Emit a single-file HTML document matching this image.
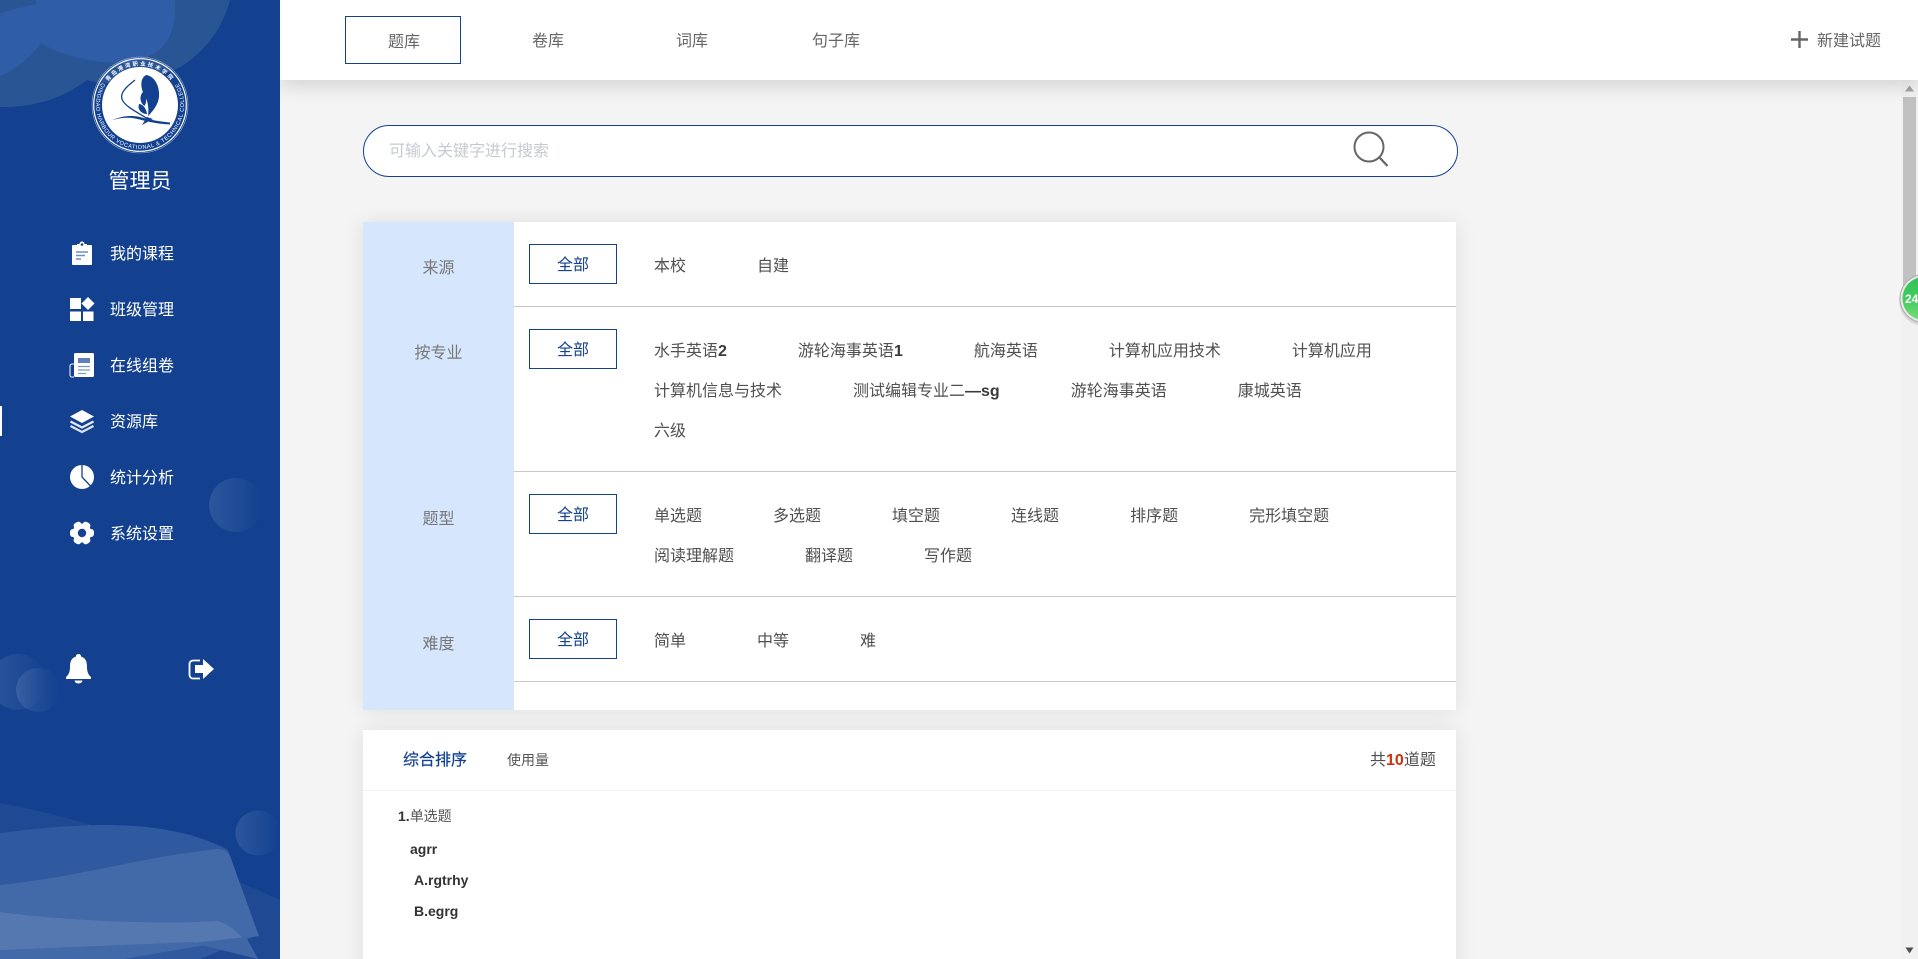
<!DOCTYPE html>
<html lang="zh-CN">
<head>
<meta charset="utf-8">
<title>题库</title>
<style>
*{margin:0;padding:0;box-sizing:border-box}
html,body{width:1918px;height:959px;overflow:hidden;background:#f4f4f4}
body{position:relative;font-family:"Liberation Sans","Noto Sans CJK SC","Microsoft YaHei",sans-serif;font-size:16px;color:#444}
.t{position:absolute;white-space:nowrap;line-height:24px;height:24px}
b{font-weight:700}
#side{position:absolute;left:0;top:0;width:280px;height:959px;background:#134190;z-index:5;overflow:hidden}
#side svg.bg{position:absolute;left:0;top:0}
#side .t{color:#fff}
#top{position:absolute;left:280px;top:0;width:1638px;height:80px;background:#fff;box-shadow:0 4px 20px rgba(0,0,0,.16);z-index:3}
.tab{position:absolute;left:345px;top:16px;width:116px;height:48px;border:1px solid #134190;z-index:4}
.card{position:absolute;left:363px;width:1093px;background:#fff;box-shadow:0 0 20px rgba(0,0,0,.09)}
.search{position:absolute;left:363px;top:125px;width:1095px;height:52px;border:1px solid #134190;border-radius:26px;background:#fff}
.lab{position:absolute;left:0;width:151px;text-align:center;color:#777;line-height:24px;height:24px;font-size:16px}
.left{position:absolute;left:0;top:0;width:151px;height:488px;background:#d6e6fd}
.hr{position:absolute;left:151px;right:0;height:1px;background:#c9c9c9}
.all{position:absolute;left:166px;width:88px;height:40px;border:1px solid #134190;color:#134190;text-align:center;line-height:41px;font-size:16px}
.ln{position:absolute;left:291px;display:flex;gap:71px;white-space:nowrap;line-height:24px;height:24px;color:#505050}
.ln b{color:#3a3a3a}
#sb{position:absolute;left:1901px;top:80px;width:17px;height:879px;background:#f1f1f1;z-index:2}
#sb i{position:absolute;left:2px;top:17px;width:13px;height:200px;background:#c1c1c1}
</style>
</head>
<body>

<div id="top"></div>
<div class="tab"></div>
<div class="t" style="left:388px;top:31px;color:#666;z-index:4">题库</div>
<div class="t" style="left:532px;top:30px;color:#666;z-index:4">卷库</div>
<div class="t" style="left:676px;top:30px;color:#666;z-index:4">词库</div>
<div class="t" style="left:812px;top:30px;color:#666;z-index:4">句子库</div>
<svg style="position:absolute;left:1788px;top:28px;z-index:4" width="24" height="24" viewBox="0 0 24 24"><path d="M3 11.500h17M11.500 3v17" stroke="#666" stroke-width="2.400" fill="none"/></svg>
<div class="t" style="left:1817px;top:30px;color:#666;z-index:4">新建试题</div>

<div id="sb"><i></i>
<svg style="position:absolute;left:0;top:0" width="17" height="17"><path d="M8.500 5.500l4.500 6h-9z" fill="#a3a3a3"/></svg>
<svg style="position:absolute;left:0;top:862px" width="17" height="17"><path d="M4.500 5.500h8l-4 6z" fill="#505050"/></svg>
</div>

<svg style="position:absolute;left:1890px;top:265px;z-index:6" width="28" height="70" viewBox="0 0 28 70">
<defs>
<linearGradient id="gb" x1="0" y1="0" x2="0" y2="1"><stop offset="0" stop-color="#2fc25a"/><stop offset=".6" stop-color="#46cf5f"/><stop offset="1" stop-color="#79dc7b"/></linearGradient>
</defs>
<circle cx="34" cy="36" r="25" fill="rgba(0,0,0,.1)"/>
<circle cx="34" cy="33.500" r="24" fill="#e8e8e8" stroke="#aaa" stroke-width="1"/>
<circle cx="34" cy="33.500" r="21.500" fill="url(#gb)"/>
<text x="15" y="38" font-family="Liberation Sans" font-weight="700" font-size="12" fill="#fff">24</text>
</svg>

<div class="search">
<div class="t" style="left:25px;top:14px;color:#c6cad2">可输入关键字进行搜索</div>
<svg style="position:absolute;left:986px;top:4px" width="42" height="42" viewBox="0 0 42 42"><circle cx="19" cy="17" r="14.500" fill="none" stroke="#666" stroke-width="2"/><path d="M29.500 27.500L37.500 36" stroke="#666" stroke-width="2.200" fill="none"/></svg>
</div>

<div class="card" style="top:222px;height:488px">
<div class="left"></div>
<div class="hr" style="top:84px"></div>
<div class="hr" style="top:249px"></div>
<div class="hr" style="top:374px"></div>
<div class="hr" style="top:459px"></div>
<div class="lab" style="top:35px">来源</div>
<div class="lab" style="top:120px">按专业</div>
<div class="lab" style="top:286px">题型</div>
<div class="lab" style="top:411px">难度</div>

<div class="all" style="top:22px">全部</div>
<div class="all" style="top:107px">全部</div>
<div class="all" style="top:272px">全部</div>
<div class="all" style="top:397px">全部</div>

<div class="ln" style="top:33px"><span>本校</span><span>自建</span></div>
<div class="ln" style="top:118px"><span>水手英语<b>2</b></span><span>游轮海事英语<b>1</b></span><span>航海英语</span><span>计算机应用技术</span><span>计算机应用</span></div>
<div class="ln" style="top:158px"><span>计算机信息与技术</span><span>测试编辑专业二<b>—sg</b></span><span>游轮海事英语</span><span>康城英语</span></div>
<div class="ln" style="top:198px"><span>六级</span></div>
<div class="ln" style="top:283px"><span>单选题</span><span>多选题</span><span>填空题</span><span>连线题</span><span>排序题</span><span>完形填空题</span></div>
<div class="ln" style="top:323px"><span>阅读理解题</span><span>翻译题</span><span>写作题</span></div>
<div class="ln" style="top:408px"><span>简单</span><span>中等</span><span>难</span></div>
</div>

<div class="card" style="top:730px;height:260px">
<div style="position:absolute;left:0;right:0;top:60px;height:1px;background:#f2f2f2"></div>
<div class="t" style="left:40px;top:19px;color:#134190;-webkit-text-stroke:.2px #134190">综合排序</div>
<div class="t" style="left:144px;top:18px;font-size:14px;color:#555">使用量</div>
<div class="t" style="left:1007px;top:19px;color:#505050">共<b style="color:#d03008">10</b>道题</div>
<div class="t" style="left:35px;top:74px;font-size:14px;color:#555"><b style="color:#333">1.</b>单选题</div>
<div class="t" style="left:47px;top:107px;font-size:14px;font-weight:700;color:#333">agrr</div>
<div class="t" style="left:51px;top:138px;font-size:14px;font-weight:700;color:#333">A.rgtrhy</div>
<div class="t" style="left:51px;top:169px;font-size:14px;font-weight:700;color:#333">B.egrg</div>
</div>

<div id="side">
<svg class="bg" width="280" height="959" viewBox="0 0 280 959">
<defs>
<linearGradient id="c1" x1="0" y1="0" x2="1" y2="0"><stop offset="0" stop-color="#fff" stop-opacity=".11"/><stop offset="1" stop-color="#fff" stop-opacity="0"/></linearGradient>
<path id="ringB" d="M140 61a44 44 0 1 0 .01 0"/>
<path id="ringT" d="M100.500 105a39.500 39.500 0 0 1 79 0"/>
</defs>
<path d="M0 0H230C222 30 205 50 185 64C160 80 110 88 87 80Q50 108 0 107Z" fill="#2a5595"/>
<path d="M0 14C12 9 25 6 36 4V0H175C176 30 170 55 130 62C95 65 60 55 41 43C30 58 15 70 0 76Z" fill="#2f5da8"/>
<circle cx="236" cy="505" r="27" fill="url(#c1)"/>
<circle cx="18" cy="682" r="28" fill="url(#c1)"/>
<circle cx="38" cy="690" r="22" fill="url(#c1)"/>
<circle cx="258" cy="833" r="22.500" fill="url(#c1)"/>

<path d="M0 803C60 814 120 832 170 853C210 870 245 884 280 900V959H0Z" fill="#1f4a93"/>
<path d="M0 833C40 828 75 825 105 825C160 825 200 835 228 850L258 935L200 959H0Z" fill="#2f5a9f"/>
<path d="M0 885C85 876 140 857 218 849Q226 849 230 856L259 936L123 959H0Z" fill="#4269a8"/>
<path d="M0 912C60 920 150 925 218 921C235 926 250 945 258 959L193 942L0 950Z" fill="#5578b0"/>
<path d="M193 943L246 937L258 959Z" fill="#3f66a6"/>

<circle cx="140" cy="105" r="48" fill="none" stroke="#fff" stroke-width=".6" opacity=".6"/>
<circle cx="140" cy="105" r="46.300" fill="none" stroke="#fff" stroke-width="1.200"/>
<circle cx="140" cy="105" r="38" fill="#fff"/>
<text font-family="Liberation Sans" font-size="5.600" letter-spacing=".55" fill="#fff" text-anchor="middle"><textPath href="#ringB" startOffset="50%">QINGDAO HARBOUR VOCATIONAL &amp; TECHNICAL COLLEGE</textPath></text>
<text font-family="Noto Sans CJK SC" font-size="5.500" font-weight="700" letter-spacing="1.900" fill="#fff" text-anchor="middle"><textPath href="#ringT" startOffset="50%">青岛港湾职业技术学院</textPath></text>
<path d="M146 75C155 76 160 87 159 97C158 105 153 111 148 116C149 108 148 102 145 96C141 90 139 79 146 75Z" fill="#134190"/>
<path d="M143 92C147 96 147 102 144.500 106C140 103 139 96 143 92Z" fill="#134190"/>
<path d="M139 104C143 104 146.500 109 147 114C142 114 137 110 139 104Z" fill="#134190"/>
<path d="M135 80C126 87 120 93 122 99C124 106 137 112 148 119" fill="none" stroke="#134190" stroke-width="1.300"/>
<path d="M112 120C122 116 130 115 140 117C150 120 160 121.500 170 122.500L170 124.500C155 124 145 120.500 135 118.500C127 117 120 118 112 120Z" fill="#134190"/>
<path d="M147 117L153 119L142 125Z" fill="#134190"/>

<rect x="0" y="406" width="2" height="30" fill="#fff"/>

<!-- clipboard -->
<path d="M73 245h4v-1h2.500a2.500 2.500 0 0 1 5 0H87v1h4a1 1 0 0 1 1 1v18a1 1 0 0 1-1 1H73a1 1 0 0 1-1-1V246a1 1 0 0 1 1-1z" fill="#fff"/>
<circle cx="82" cy="244.500" r="1.300" fill="#134190"/>
<path d="M76 252h12M76 255.500h9M76 259h5" stroke="#6f8dc2" stroke-width="1.400"/>
<!-- grid -->
<path d="M70 298h11v11H70zM70 311.500h11V321H70zM83 311.500h10.500V321H83z" fill="#fff"/>
<path d="M88 297l6.500 6.500L88 310l-6.500-6.500z" fill="#fff"/>
<!-- paper -->
<rect x="74" y="353" width="20" height="24" rx="1.500" fill="#fff"/>
<path d="M74 364h-2a2 2 0 0 0-2 2v9a2 2 0 0 0 2 2h2" fill="none" stroke="#c5d2e8" stroke-width="1.300"/>
<rect x="78" y="358" width="12" height="5" fill="#5f80ba"/>
<path d="M78 366.500h12M78 370h12M78 373.500h8" stroke="#7f9ac9" stroke-width="1.300"/>
<!-- layers -->
<path d="M82 410L94 416.500L82 423L70 416.500Z" fill="#fff"/>
<path d="M70.500 421.500L82 427.500L93.500 421.500" fill="none" stroke="#e5ebf5" stroke-width="2.300"/>
<path d="M70.500 426L82 432L93.500 426" fill="none" stroke="#dbe3f1" stroke-width="2.300"/>
<!-- pie -->
<circle cx="82" cy="477" r="12" fill="#fff"/>
<path d="M82 465V477L90.500 486" fill="none" stroke="#134190" stroke-width="1.300"/>
<!-- gear -->
<g fill="#fff">
<circle cx="82" cy="533" r="9.500"/>
<rect x="78" y="521" width="8" height="24" rx="3" transform="rotate(90 82 533)"/>
<rect x="78" y="521" width="8" height="24" rx="3" transform="rotate(30 82 533)"/>
<rect x="78" y="521" width="8" height="24" rx="3" transform="rotate(150 82 533)"/>
</g>
<circle cx="82" cy="533" r="4.200" fill="#134190"/>
<!-- bell -->
<path d="M78.500 654c-1.600 0-2.600 1.100-2.600 2.600C71 658 70 662 70 667c0 5-1.500 8-4 10v2h25v-2c-2.500-2-4-5-4-10 0-5-1-9-5.900-10.400 0-1.500-1-2.600-2.600-2.600zM74.500 680.500h8a4 3 0 0 1-8 0z" fill="#fff"/>
<!-- logout -->
<path d="M200 660.500h-7a3.500 3.500 0 0 0-3.500 3.500v11a3.500 3.500 0 0 0 3.500 3.500h7" fill="none" stroke="#fff" stroke-width="1.800"/>
<path d="M195 665h8v-6l11 10-11 10v-6h-8z" fill="#fff"/>
</svg>

<div class="t" style="left:0;width:280px;text-align:center;top:168px;font-size:21px;line-height:28px;height:28px">管理员</div>
<div class="t" style="left:110px;top:243px">我的课程</div>
<div class="t" style="left:110px;top:299px">班级管理</div>
<div class="t" style="left:110px;top:355px">在线组卷</div>
<div class="t" style="left:110px;top:411px">资源库</div>
<div class="t" style="left:110px;top:467px">统计分析</div>
<div class="t" style="left:110px;top:523px">系统设置</div>
</div>

</body>
</html>
